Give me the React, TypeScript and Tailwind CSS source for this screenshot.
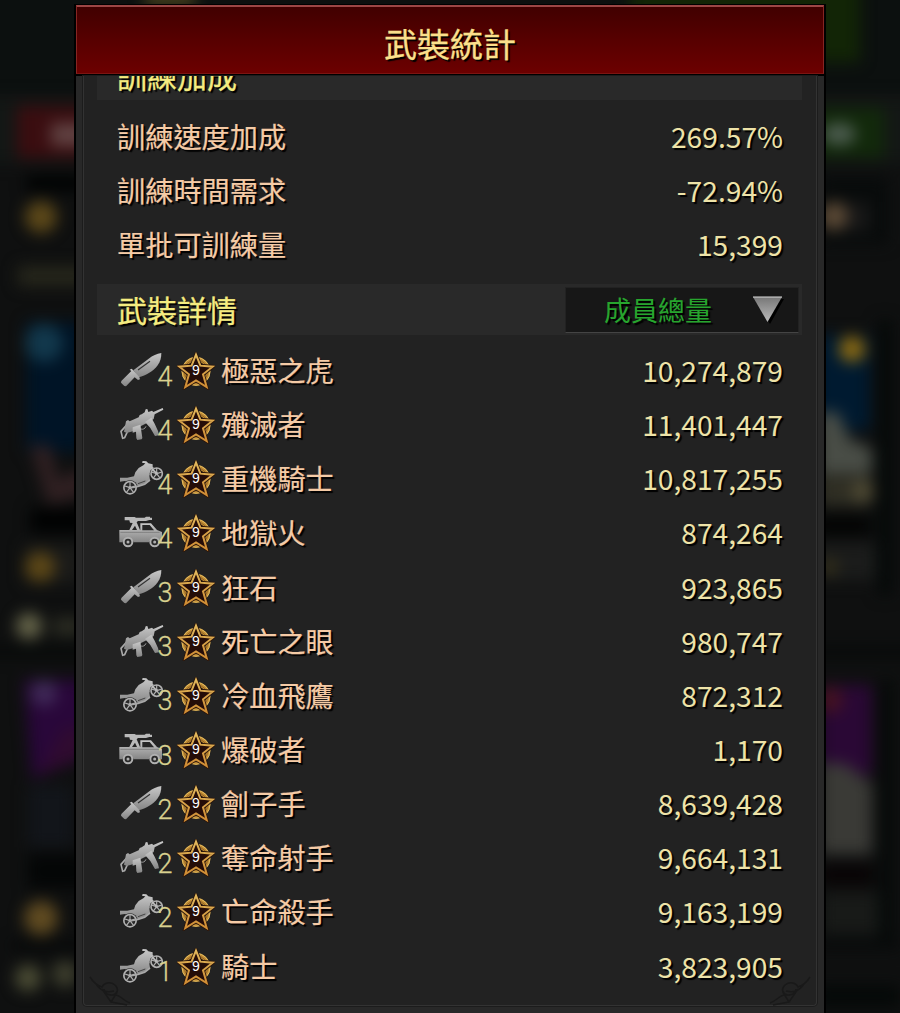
import React from "react";

type UnitKind = "knife" | "gun" | "bike" | "truck";

interface Unit {
  kind: UnitKind;
  tier: number;
  name: string;
  amount: string;
}

const bonuses = [
  { label: "訓練速度加成", value: "269.57%" },
  { label: "訓練時間需求", value: "-72.94%" },
  { label: "單批可訓練量", value: "15,399" },
];

const units: Unit[] = [
  { kind: "knife", tier: 4, name: "極惡之虎", amount: "10,274,879" },
  { kind: "gun", tier: 4, name: "殲滅者", amount: "11,401,447" },
  { kind: "bike", tier: 4, name: "重機騎士", amount: "10,817,255" },
  { kind: "truck", tier: 4, name: "地獄火", amount: "874,264" },
  { kind: "knife", tier: 3, name: "狂石", amount: "923,865" },
  { kind: "gun", tier: 3, name: "死亡之眼", amount: "980,747" },
  { kind: "bike", tier: 3, name: "冷血飛鷹", amount: "872,312" },
  { kind: "truck", tier: 3, name: "爆破者", amount: "1,170" },
  { kind: "knife", tier: 2, name: "劊子手", amount: "8,639,428" },
  { kind: "gun", tier: 2, name: "奪命射手", amount: "9,664,131" },
  { kind: "bike", tier: 2, name: "亡命殺手", amount: "9,163,199" },
  { kind: "bike", tier: 1, name: "騎士", amount: "3,823,905" },
];

const Wheel: React.FC<{ cx: number; cy: number; r: number }> = ({ cx, cy, r }) => (
  <g stroke="#b0b0b0" fill="none">
    <circle cx={cx} cy={cy} r={r + 4} fill="#222" stroke="none" />
    <circle cx={cx} cy={cy} r={r} strokeWidth="5" fill="#2a2a2a" />
    <circle cx={cx} cy={cy} r="4" fill="#b0b0b0" />
    <path
      d={`M${cx} ${cy}v${-r}M${cx} ${cy}l${r * 0.95} ${-r * 0.3}M${cx} ${cy}l${r * 0.6} ${r * 0.8}M${cx} ${cy}l${-r * 0.6} ${r * 0.8}M${cx} ${cy}l${-r * 0.95} ${-r * 0.3}`}
      strokeWidth="3.5"
    />
  </g>
);

const UnitIcon: React.FC<{ kind: UnitKind }> = ({ kind }) => (
  <svg viewBox="0 0 144 114" className="mt-[2px] h-[38px] w-12 shrink-0">
    {kind === "knife" && (
      <g fill="url(#steel)">
        <path d="M130 3C116 5 104 11 92 20L46 55l16 21C84 70 106 58 119 40 127 28 130 18 130 3Z" />
        <path d="M35 53l6-3 6 6 17 19 2 7-6 2-10-8-26 27-5-1-10-10 1-5 30-30Z" />
        <path d="M60 54l36-26" stroke="#333" strokeWidth="3.500" />
      </g>
    )}
    {kind === "gun" && (
      <g>
        <path d="M25 58L9 76l5 21 6-2 12-26" fill="none" stroke="#aaa" strokeWidth="5" strokeLinejoin="round" />
        <g fill="url(#steel)">
          <path d="M24 46l6-4 5 4 27-12 3-7 6-2 9-6 3-9 5-1 3 9 11-4 4 4 28-12 2 5-26 14-3 14-14 9-24 12-6 6-16 9-21 6-8-4Z" />
          <path d="M44 64l23-8 2 12 4 28-2 4-13 2-3-5-1-20-10 3Z" />
          <path d="M81 48l19-13 10 18 10 22 3 13-12 2-14-24Z" />
        </g>
        <path d="M69 69c5 2 12 0 15-8" fill="none" stroke="#999" strokeWidth="3" />
      </g>
    )}
    {kind === "bike" && (
      <g>
        <path
          fill="url(#steel)"
          d="M6 53l22 0 20-4 4-12 10-13 14-8 6-6-10-2 2-5 11 1 6 6 13 3 0 7 10 6-12 8-8 13 2 13-13 12-20 7-17 2-12-13-14-5-14 2Z"
        />
        <Wheel cx={36} cy={83} r={18.5} />
        <Wheel cx={116} cy={41} r={17} />
        <path d="M36 84l24-5 20-6 16-13" fill="none" stroke="#a8a8a8" strokeWidth="5" />
        <path d="M98 22l18 19" stroke="#bdbdbd" strokeWidth="5" />
        <path d="M60 71l22-8" stroke="#444" strokeWidth="3" />
      </g>
    )}
    {kind === "truck" && (
      <g>
        <path
          fill="url(#steel)"
          d="M4 48h63V28h32l18 20 15 6v31h-6a18 18 0 0 0-33 0H47a18 18 0 0 0-34 0H4V48Z"
        />
        <path d="M73 33h22l13 16H73Z" fill="#252525" />
        <path d="M7 55h118" stroke="#6c6c6c" strokeWidth="2" />
        <path d="M20 9h30l4 2h26l4-3h12v3h6v7H94l-10 3H60l-4 4 10 23h-9l-6-13-9 13h-8l10-21-8-1-2-7H20Z" fill="#b9b9b9" />
        <g fill="#2a2a2a" stroke="#b0b0b0" strokeWidth="6">
          <circle cx="30" cy="84" r="13" />
          <circle cx="110" cy="84" r="13" />
        </g>
        <circle cx="30" cy="84" r="4.500" fill="#b0b0b0" />
        <circle cx="110" cy="84" r="4.500" fill="#b0b0b0" />
      </g>
    )}
  </svg>
);

const StarBadge: React.FC = () => (
  <div className="mt-[2px] ml-1 grid h-[38px] w-[38px] shrink-0 place-items-center">
    <svg viewBox="0 0 114 114" className="col-start-1 row-start-1 h-[38px] w-[38px]">
      <circle cx="57" cy="58" r="37" fill="#21130c" stroke="#c08c35" strokeWidth="12" />
      <circle cx="57" cy="58" r="42" fill="none" stroke="#edc768" strokeWidth="2.500" />
      <circle cx="57" cy="58" r="35" fill="none" stroke="#7a4e1c" strokeWidth="2" />
      <path
        d="M57 8l13 33 37 3-29 23 11 38-32-20-32 20 11-38L7 44l37-3Z"
        fill="#210b07"
        stroke="#2a150b"
        strokeWidth="11"
      />
      <path
        d="M57 8l13 33 37 3-29 23 11 38-32-20-32 20 11-38L7 44l37-3Z"
        fill="#250d08"
        stroke="url(#gold)"
        strokeWidth="6"
      />
    </svg>
    <span className="col-start-1 row-start-1 mb-[2px] font-['Liberation_Sans'] text-[14px] leading-none text-white">9</span>
  </div>
);

// Blurred base scene that shows on both sides of the dialog
const Backdrop: React.FC = () => (
  <svg viewBox="0 0 900 1013" className="absolute inset-0 h-full w-full">
    <defs>
      <filter id="soft" x="-10%" y="-10%" width="120%" height="120%" colorInterpolationFilters="sRGB">
        <feGaussianBlur stdDeviation="7.5" />
      </filter>
      <linearGradient id="steel" x1="0" y1="0" x2="0" y2="1">
        <stop offset="0" stopColor="#c8c8c8" />
        <stop offset="1" stopColor="#858585" />
      </linearGradient>
      <linearGradient id="gold" x1="0" y1="0" x2="0" y2="1">
        <stop offset="0" stopColor="#e2b85c" />
        <stop offset="1" stopColor="#cf8c34" />
      </linearGradient>
    </defs>
    <rect width="900" height="1013" fill="#0f1010" />
    <rect width="900" height="94" fill="#0c100f" />
    <g filter="url(#soft)">
      <rect x="145" y="-8" width="50" height="12" fill="#5a5022" />
      <rect x="630" y="-20" width="230" height="82" fill="#122506" />
      <rect x="-20" y="97" width="940" height="66" fill="#131715" />
      <rect x="17" y="106" width="90" height="52" fill="#3a0d10" />
      <rect x="51" y="123" width="60" height="23" fill="#604242" />
      <rect x="790" y="108" width="94" height="50" fill="#12290b" />
      <ellipse cx="839" cy="134" rx="17" ry="11" fill="#4c5c4f" />
      <rect x="26" y="176" width="60" height="15" fill="#000202" />
      <circle cx="41" cy="217" r="16" fill="#5c4819" />
      <rect x="820" y="178" width="68" height="66" fill="#080b0b" />
      <rect x="820" y="202" width="50" height="30" fill="#171717" />
      <circle cx="834" cy="216" r="14" fill="#5b4935" />
      <rect x="18" y="266" width="70" height="20" fill="#26261b" />
      <rect x="26" y="322" width="60" height="130" fill="#001426" />
      <circle cx="44" cy="343" r="19" fill="#12384c" />
      <path d="M30 445l20 0 8 35 30-15v30l-40 10Z" fill="#302022" />
      <rect x="30" y="508" width="60" height="25" fill="#010202" />
      <rect x="24" y="545" width="60" height="38" fill="#1b1b19" />
      <circle cx="40" cy="567" r="15" fill="#5c4717" />
      <circle cx="29" cy="626" r="13" fill="#66654a" />
      <rect x="53" y="618" width="30" height="17" fill="#2c2d23" />
      <rect x="815" y="335" width="55" height="95" fill="#001a30" />
      <circle cx="852" cy="349" r="13" fill="#8a6912" />
      <path d="M818 412h20l12 28 22 8v26h-54Z" fill="#494d46" />
      <rect x="818" y="476" width="53" height="30" fill="#302f24" />
      <circle cx="863" cy="491" r="11" fill="#504b34" />
      <rect x="878" y="320" width="14" height="275" fill="#050908" />
      <rect x="815" y="516" width="55" height="19" fill="#030403" />
      <rect x="815" y="543" width="60" height="37" fill="#1b1c1b" />
      <circle cx="829" cy="567" r="9" fill="#342f1a" />
      <rect x="-20" y="648" width="940" height="8" fill="#050807" />
      <path d="M24 680h64v77l-56 22Z" fill="#29073a" />
      <circle cx="44" cy="693" r="13" fill="#402a58" />
      <path d="M64 728h24v27l-50 20Z" fill="#300b30" />
      <rect x="28" y="785" width="45" height="62" fill="#12151a" />
      <rect x="28" y="854" width="60" height="34" fill="#040606" />
      <circle cx="41" cy="918" r="17" fill="#604b21" />
      <rect x="10" y="942" width="78" height="7" fill="#040606" />
      <circle cx="28" cy="978" r="13" fill="#4c4d35" />
      <circle cx="65" cy="974" r="13" fill="#3e3f2e" />
      <rect x="820" y="685" width="52" height="90" fill="#2a0835" />
      <circle cx="830" cy="700" r="13" fill="#441222" />
      <path d="M820 762l26 2 26 20v70h-52Z" fill="#3a3a36" />
      <rect x="820" y="865" width="54" height="20" fill="#080405" />
      <rect x="822" y="893" width="56" height="40" fill="#181a18" />
      <rect x="880" y="680" width="12" height="260" fill="#050908" />
      <rect x="815" y="940" width="85" height="8" fill="#060909" />
      <rect x="815" y="985" width="85" height="22" fill="#050908" />
    </g>
  </svg>
);

const CornerOrnament: React.FC<{ className?: string }> = ({ className }) => (
  <svg viewBox="0 0 46 32" className={`h-8 w-[46px] ${className ?? ""}`} fill="none" stroke="#191919" strokeWidth="1.5">
    <path d="M1 2c3 5 6 8 12 10 2-4 8-6 13-2 4 4 3 8-2 10 6-2 10 6 17 8M7 9c5 7 10 9 18 7M15 14c1 6 7 7 12 5l-5 8 16 3M13 14l9 13" />
  </svg>
);

const App: React.FC = () => {
  return (
    <div className="relative h-[1013px] w-[900px] overflow-hidden bg-[#0f1010] font-['Noto_Sans_CJK_TC',sans-serif]">
      <Backdrop />

      <div className="relative ml-[74px] flex h-full w-[752px] flex-col pt-[4px]">
        <header className="flex h-[72px] shrink-0 items-center justify-center border border-black bg-black px-px pb-px">
          <div className="flex h-full w-full items-center justify-center border border-t-2 border-[#862522] border-t-[#9c4645] border-b-[#7c1411] bg-linear-to-b from-[#410000] via-[#570000] to-[#6c0000]">
            <h1 className="pt-[6px] text-[33px] leading-none text-[#fbe08c] [-webkit-text-stroke:0.3px_#fbe08c] [text-shadow:2px_2px_1px_#000]">武裝統計</h1>
          </div>
        </header>

        <main className="flex min-h-0 flex-1 flex-col border-x-2 border-black bg-[#282828] px-[2px]">
          <div className="mx-[5px] flex h-[930px] shrink-0 flex-col rounded-b-sm border border-t-0 border-[#333] bg-[#222] shadow-[0_0_0_1px_#1c1c1c]">
            <div className="mr-[14px] ml-[13px] h-[24px] shrink-0 overflow-hidden bg-[#292929] pl-[20px]">
              <h2 className="-mt-[17px] text-[30px] leading-[32px] text-[#f5ec80] [-webkit-text-stroke:0.3px_#f5ec80] [text-shadow:2px_2px_1px_#000]">訓練加成</h2>
            </div>

            <div className="mt-[9px] shrink-0 pr-[33px] pl-[33px] text-[28px]">
              {bonuses.map((bonus) => (
                <div key={bonus.label} className="flex h-[54px] items-center justify-between leading-none [text-shadow:2px_2px_1px_#000]">
                  <span className="text-[28.2px] text-[#f5cba6] [-webkit-text-stroke:0.2px_#f5cba6]">{bonus.label}</span>
                  <span className="text-[28.2px] text-[#eee3a8]">{bonus.value}</span>
                </div>
              ))}
            </div>

            <div className="mt-[13px] mr-[14px] ml-[13px] flex h-[51px] shrink-0 items-center justify-between bg-[#292929] pr-[3px] pl-[20px]">
              <h2 className="pb-[2px] text-[30px] leading-none text-[#f5ec80] [-webkit-text-stroke:0.3px_#f5ec80] [text-shadow:2px_2px_1px_#000]">武裝詳情</h2>
              <button className="flex h-[46px] w-[234px] items-center justify-between border border-[#222] border-b-[#444] bg-[#171717] pr-[14px] pl-[38px]">
                <span className="text-[27px] leading-none text-[#27a52e] [text-shadow:2px_2px_1px_#000]">成員總量</span>
                <svg viewBox="0 0 32 28" className="h-7 w-8">
                  <defs>
                    <linearGradient id="arrow" x1="0" y1="0" x2="0" y2="1">
                      <stop offset="0" stopColor="#777" />
                      <stop offset="1" stopColor="#bbb" />
                    </linearGradient>
                  </defs>
                  <path d="M3 3h29L18 28Z" fill="#000" />
                  <path d="M1 1h29L15.500 26Z" fill="url(#arrow)" />
                  <path d="M1 1h29" stroke="#ddd" />
                </svg>
              </button>
            </div>

            <div className="mt-[8px] shrink-0 pr-[33px] pl-[34px] text-[28.2px]">
              {units.map((unit) => (
                <div key={unit.name} className="flex h-[54.15px] items-center leading-none">
                  <UnitIcon kind={unit.kind} />
                  <span className="relative -ml-[9px] w-4 pt-[14px] text-center font-[Roboto] text-[27px] font-light text-[#d9d18f] [-webkit-text-stroke:0.3px_#d9d18f]">
                    {unit.tier}
                  </span>
                  <StarBadge />
                  <span className="ml-[6px] text-[#f5cba6] [-webkit-text-stroke:0.2px_#f5cba6] [text-shadow:2px_2px_1px_#000]">{unit.name}</span>
                  <span className="ml-auto text-[#eee3a8] [text-shadow:2px_2px_1px_#000]">{unit.amount}</span>
                </div>
              ))}
            </div>

            <div className="-mt-[18px] flex shrink-0 justify-between px-[5px]">
              <CornerOrnament />
              <CornerOrnament className="-scale-x-100" />
            </div>
          </div>
        </main>
      </div>
    </div>
  );
};

export default App;
